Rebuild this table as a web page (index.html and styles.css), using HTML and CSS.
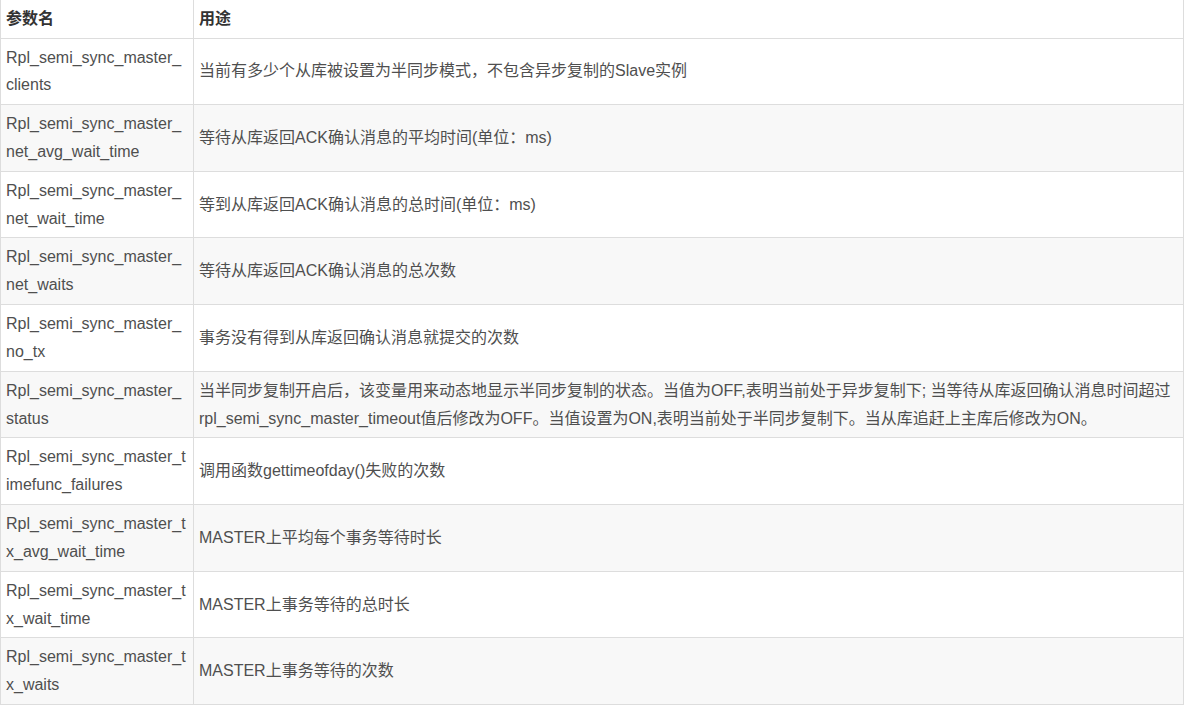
FILE: index.html
```html
<!DOCTYPE html>
<html lang="zh">
<head>
<meta charset="utf-8">
<title>半同步复制状态变量</title>
<link rel="stylesheet" href="styles.css">
</head>
<body>
<table class="params">
  <colgroup>
    <col class="col-name">
    <col class="col-desc">
  </colgroup>
  <thead>
    <tr><th>参数名</th><th>用途</th></tr>
  </thead>
  <tbody>
    <tr><td>Rpl_semi_sync_master_clients</td><td>当前有多少个从库被设置为半同步模式，不包含异步复制的Slave实例</td></tr>
    <tr><td>Rpl_semi_sync_master_net_avg_wait_time</td><td>等待从库返回ACK确认消息的平均时间(单位：ms)</td></tr>
    <tr><td>Rpl_semi_sync_master_net_wait_time</td><td>等到从库返回ACK确认消息的总时间(单位：ms)</td></tr>
    <tr><td>Rpl_semi_sync_master_net_waits</td><td>等待从库返回ACK确认消息的总次数</td></tr>
    <tr><td>Rpl_semi_sync_master_no_tx</td><td>事务没有得到从库返回确认消息就提交的次数</td></tr>
    <tr><td>Rpl_semi_sync_master_status</td><td>当半同步复制开启后，该变量用来动态地显示半同步复制的状态。当值为OFF,表明当前处于异步复制下; 当等待从库返回确认消息时间超过rpl_semi_sync_master_timeout值后修改为OFF。当值设置为ON,表明当前处于半同步复制下。当从库追赶上主库后修改为ON。</td></tr>
    <tr><td>Rpl_semi_sync_master_timefunc_failures</td><td>调用函数gettimeofday()失败的次数</td></tr>
    <tr><td>Rpl_semi_sync_master_tx_avg_wait_time</td><td>MASTER上平均每个事务等待时长</td></tr>
    <tr><td>Rpl_semi_sync_master_tx_wait_time</td><td>MASTER上事务等待的总时长</td></tr>
    <tr><td>Rpl_semi_sync_master_tx_waits</td><td>MASTER上事务等待的次数</td></tr>
  </tbody>
</table>
</body>
</html>
```

FILE: styles.css
```css
html, body {
  margin: 0;
  padding: 0;
  background: #ffffff;
}

.params {
  width: 1184px;
  margin-top: -1.5px;
  border-collapse: collapse;
  table-layout: fixed;
  font-family: "Liberation Sans", Arial, "Noto Sans CJK SC", sans-serif;
  font-size: 16px;
  line-height: 27.833px;
  color: #4f4f4f;
}

.col-name {
  width: 193px;
}

.params th,
.params td {
  border: 1px solid #dddddd;
  padding: 5px 5px;
  text-align: left;
  vertical-align: middle;
}

.params td:first-child {
  word-break: break-all;
}

.params th {
  font-weight: bold;
  color: #333333;
  background: #ffffff;
  line-height: 28px;
}

.params tbody tr:nth-child(odd) td {
  background: #ffffff;
}

.params tbody tr:nth-child(even) td {
  background: #f8f8f8;
}
```
